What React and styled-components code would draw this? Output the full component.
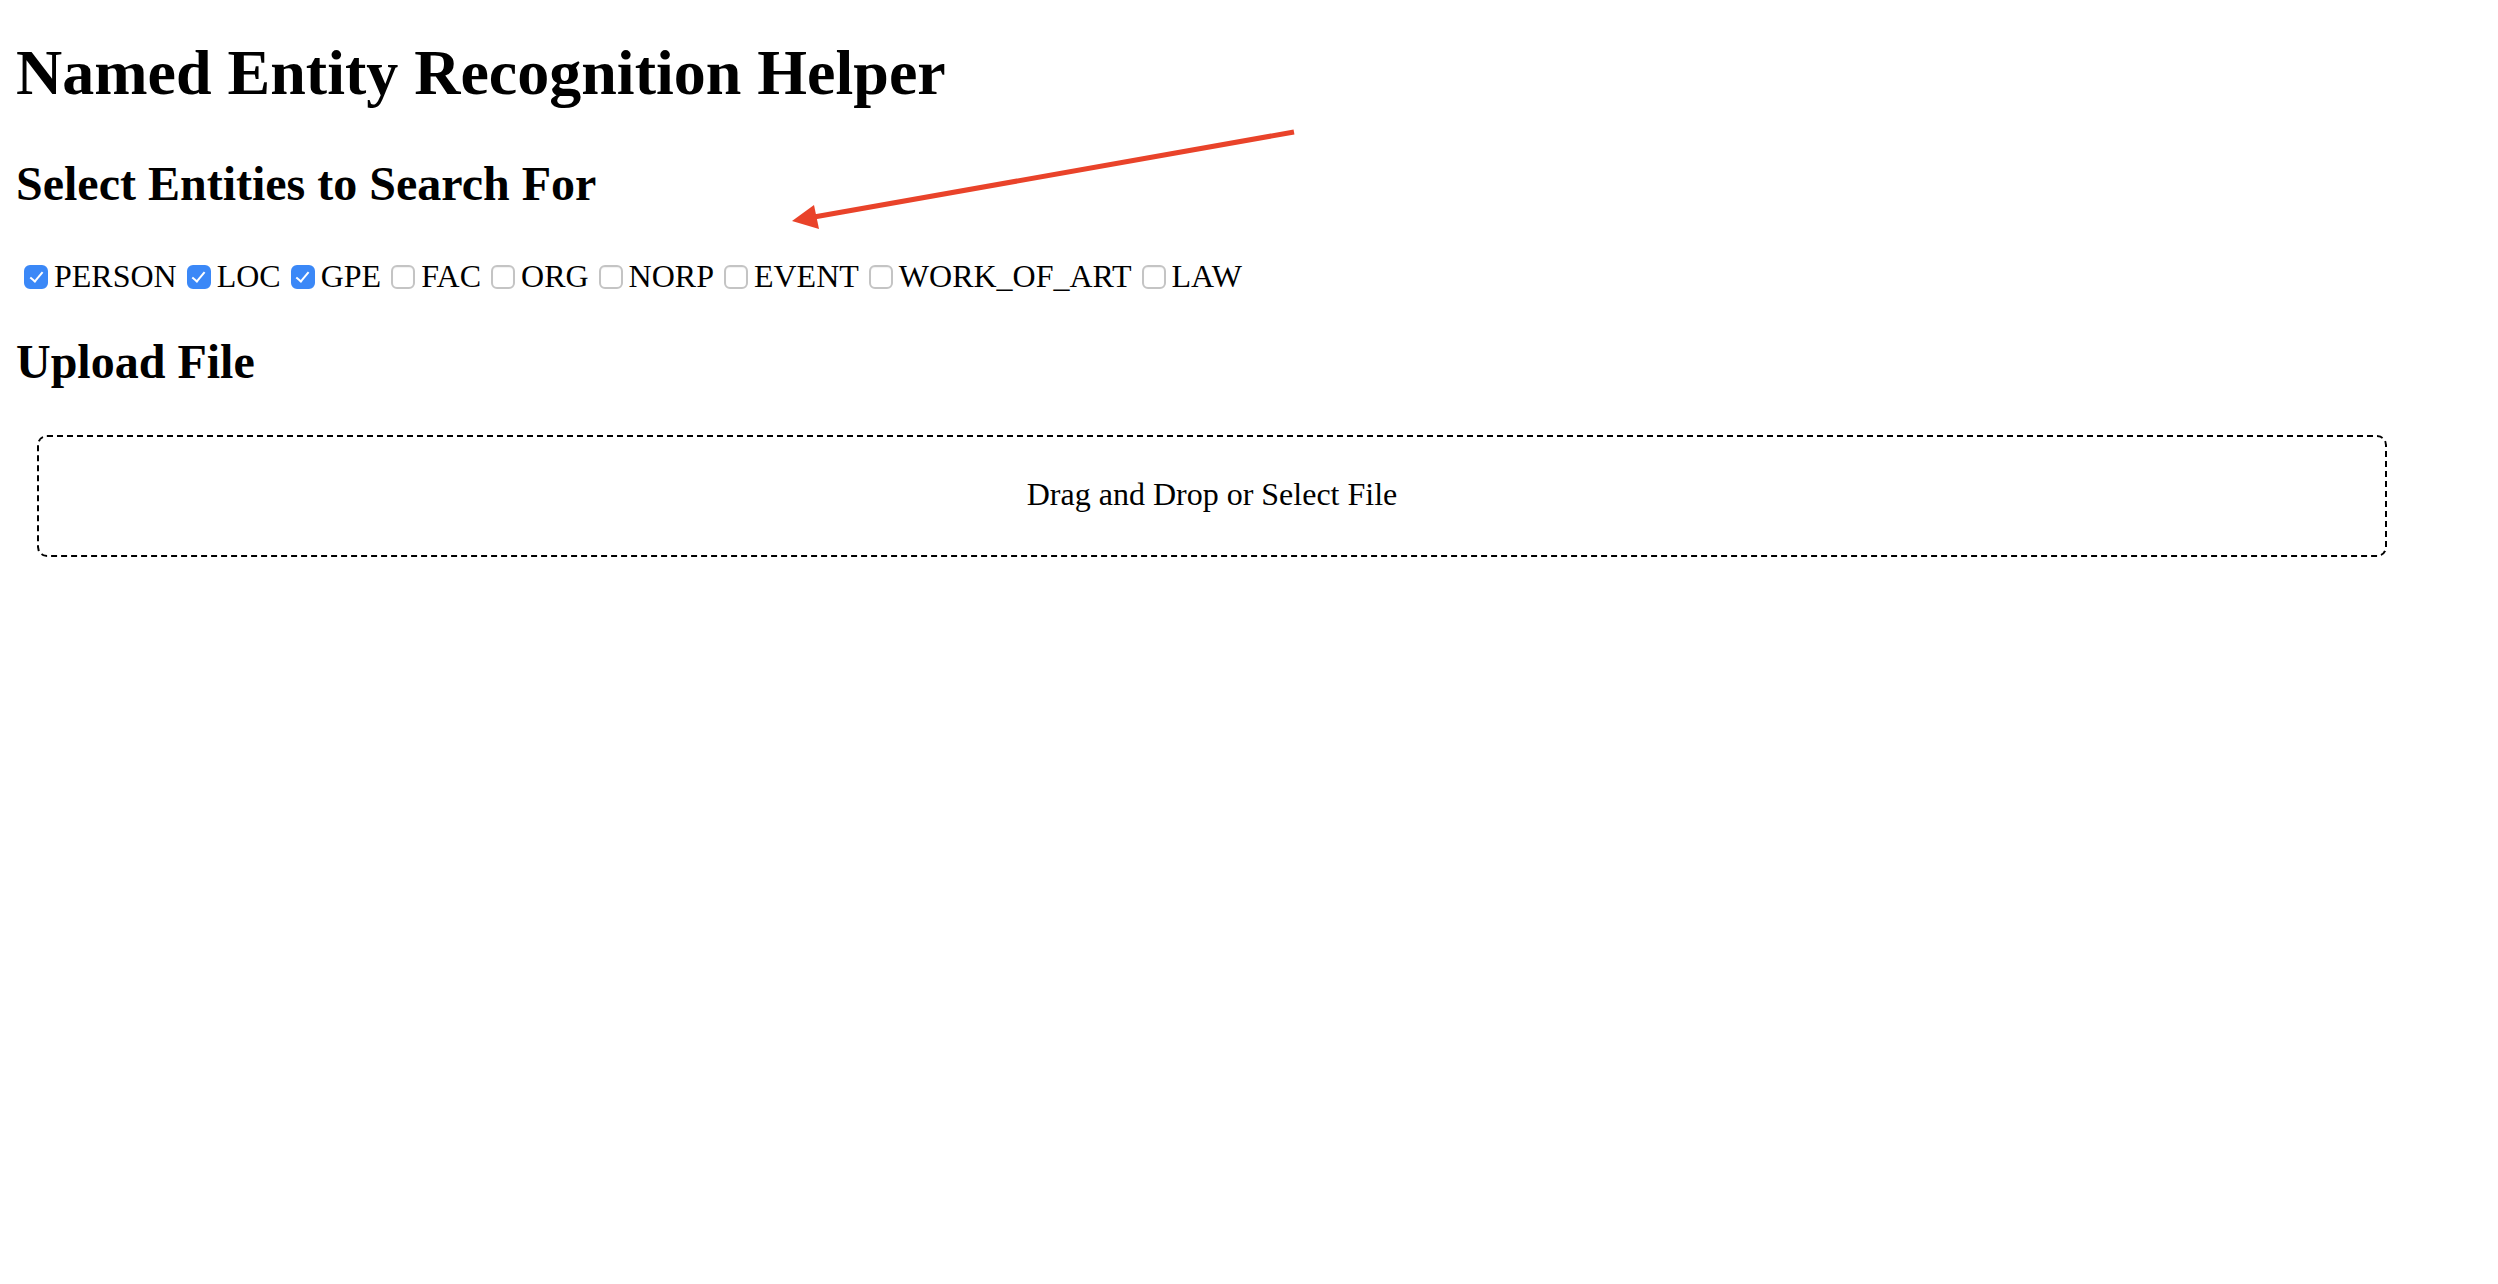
import React, { useState } from "react";
import styled, { createGlobalStyle } from "styled-components";

const GlobalStyle = createGlobalStyle`
  html, body {
    margin: 0;
    padding: 0;
    background: #ffffff;
    color: #000000;
    font-family: "Liberation Serif", "Times New Roman", serif;
  }
`;

const Page = styled.div`
  position: relative;
  padding: 0 16px;
  min-height: 1284px;
  box-sizing: border-box;
  overflow: hidden;
`;

const Title = styled.h1`
  margin: 41px 0 0;
  font-size: 64px;
  line-height: 64px;
  font-weight: bold;
`;

const SectionTitle = styled.h2`
  margin: ${(p) => p.$top}px 0 0;
  font-size: 48px;
  line-height: 48px;
  font-weight: bold;
`;

const EntityRow = styled.div`
  display: flex;
  align-items: center;
  gap: 10px;
  margin-top: 52px;
  padding-left: 8px;
  height: 32px;
`;

const EntityOption = styled.label`
  display: flex;
  align-items: center;
  font-size: 32px;
  line-height: 32px;
  cursor: pointer;
`;

const Checkbox = styled.input`
  appearance: none;
  -webkit-appearance: none;
  position: relative;
  width: 24px;
  height: 24px;
  margin: 1px 6px 0 0;
  border-radius: 6px;
  box-sizing: border-box;
  border: 2px solid #c4c4c4;
  background: #ffffff;
  box-shadow: inset 0 1px 1px rgba(0, 0, 0, 0.06);

  &:checked {
    background: #3b88f7;
    border-color: #3b88f7;
    box-shadow: none;
  }

  &:checked::after {
    content: "";
    position: absolute;
    left: 6.5px;
    top: 2px;
    width: 5px;
    height: 11px;
    border-right: 2.5px solid #ffffff;
    border-bottom: 2.5px solid #ffffff;
    transform: rotate(40deg);
  }
`;

const DropZone = styled.div`
  margin: 49px 95px 0 21px;
  height: 122px;
  padding-bottom: 5px;
  box-sizing: border-box;
  border: 2px dashed #000000;
  border-radius: 10px;
  display: flex;
  align-items: center;
  justify-content: center;
  font-size: 32px;
  line-height: 32px;
  cursor: pointer;
`;

const Annotation = styled.svg`
  position: absolute;
  left: 0;
  top: 0;
  pointer-events: none;
`;

const ENTITIES = [
  "PERSON",
  "LOC",
  "GPE",
  "FAC",
  "ORG",
  "NORP",
  "EVENT",
  "WORK_OF_ART",
  "LAW",
];

const App = () => {
  const [selected, setSelected] = useState(["PERSON", "LOC", "GPE"]);

  const toggleEntity = (name) => {
    setSelected((prev) =>
      prev.includes(name) ? prev.filter((n) => n !== name) : [...prev, name]
    );
  };

  return (
    <>
      <GlobalStyle />
      <Page>
        <Title>Named Entity Recognition Helper</Title>
        <SectionTitle $top={55}>Select Entities to Search For</SectionTitle>
        <EntityRow>
          {ENTITIES.map((name) => (
            <EntityOption key={name}>
              <Checkbox
                type="checkbox"
                checked={selected.includes(name)}
                onChange={() => toggleEntity(name)}
              />
              {name}
            </EntityOption>
          ))}
        </EntityRow>
        <SectionTitle $top={46}>Upload File</SectionTitle>
        <DropZone>Drag and Drop or Select File</DropZone>

        {/* red annotation arrow */}
        <Annotation width="2498" height="1284">
          <line
            x1="1294"
            y1="132"
            x2="814"
            y2="217"
            stroke="#e9432a"
            strokeWidth="5"
          />
          <polygon points="792,221 814,205 819,229" fill="#e9432a" />
        </Annotation>
      </Page>
    </>
  );
};

export default App;
